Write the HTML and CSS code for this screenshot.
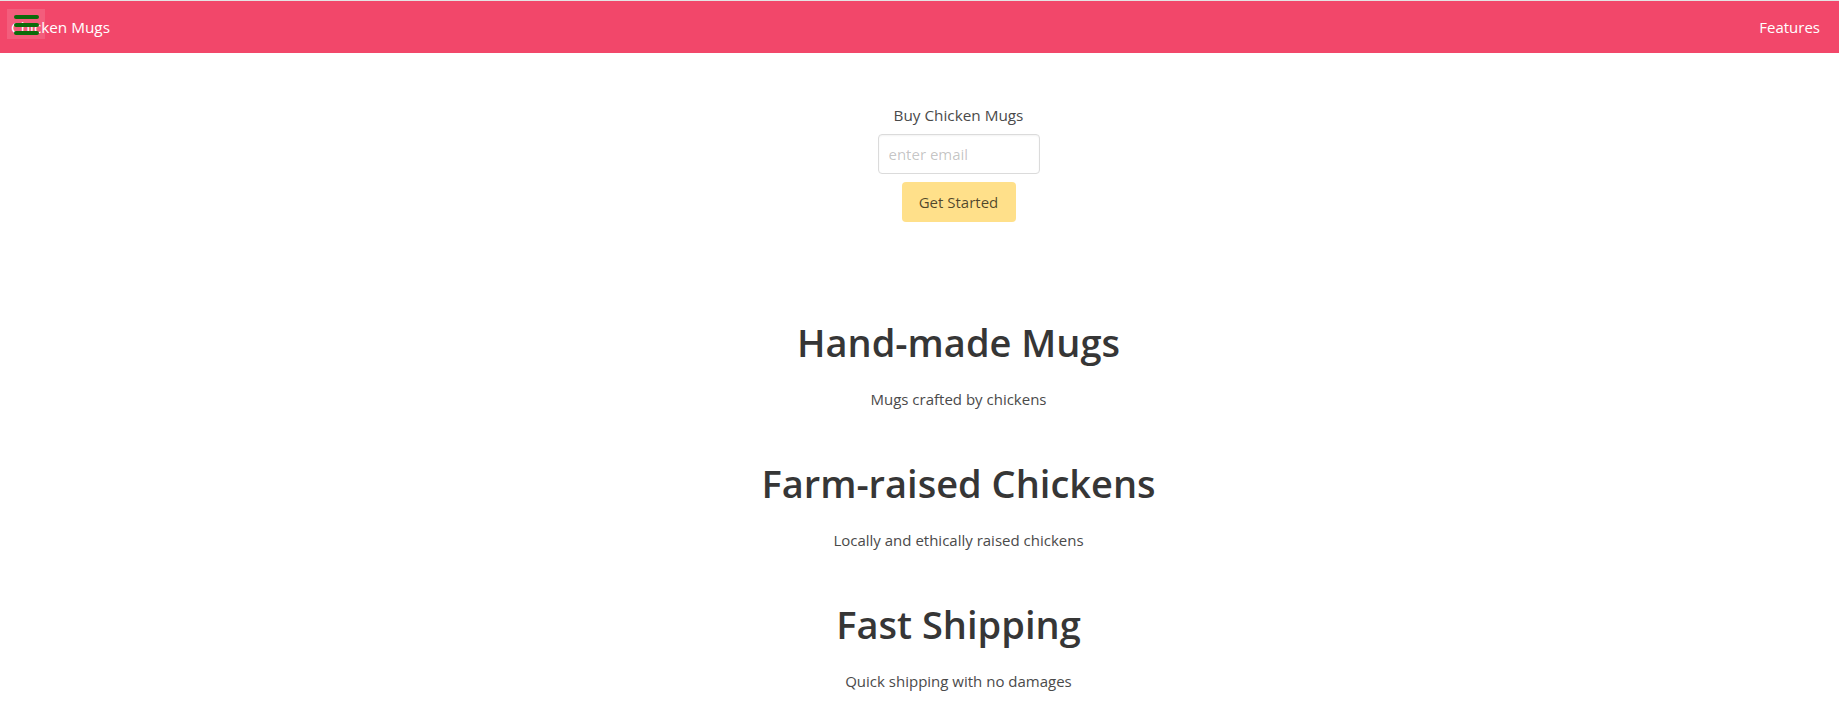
FILE: index.html
```html
<!DOCTYPE html>
<html lang="en">
<head>
<meta charset="utf-8">
<title>Chicken Mugs</title>
<link rel="stylesheet" href="styles.css">
</head>
<body>
<nav class="navbar">
  <div class="brand">
    <span class="brand-text">Chicken Mugs</span>
    <span class="burger" aria-hidden="true"><i></i><i></i><i></i></span>
  </div>
  <a class="nav-link" href="#features">Features</a>
</nav>
<main class="page">
  <section class="signup">
    <p class="signup-label">Buy Chicken Mugs</p>
    <input class="email" type="email" placeholder="enter email">
    <button class="cta" type="button">Get Started</button>
  </section>
  <section class="features" id="features">
    <div class="feature">
      <h2 class="feature-title">Hand-made Mugs</h2>
      <p class="feature-text">Mugs crafted by chickens</p>
    </div>
    <div class="feature">
      <h2 class="feature-title">Farm-raised Chickens</h2>
      <p class="feature-text">Locally and ethically raised chickens</p>
    </div>
    <div class="feature">
      <h2 class="feature-title">Fast Shipping</h2>
      <p class="feature-text">Quick shipping with no damages</p>
    </div>
  </section>
</main>
</body>
</html>
```

FILE: styles.css
```css
* { box-sizing: border-box; }
html, body { margin: 0; padding: 0; }
body {
  font-family: "Open Sans", "Noto Sans", sans-serif;
  font-size: 16px;
  line-height: 1.5;
  color: #4a4a4a;
  background: #fff;
  border-top: 1px solid #e4e4e4;
}
.navbar {
  height: 52px;
  background: #f2476a;
  display: flex;
  align-items: center;
  justify-content: space-between;
  padding: 0 19px 0 11px;
}
.brand { position: relative; display: flex; align-items: center; }
.brand-text { color: #fff; font-size: 15.3px; }
.burger {
  position: absolute;
  left: -4px;
  top: -7px;
  width: 38px;
  height: 30px;
  background: rgba(255,255,255,0.12);
  display: flex;
  flex-direction: column;
  align-items: center;
  gap: 4px;
  padding-top: 6px;
}
.burger i {
  display: block;
  width: 25px;
  height: 4px;
  border-radius: 2px;
  background: #0b6b0b;
}
.nav-link { color: #fff; text-decoration: none; font-size: 15px; }
.page {
  display: flex;
  flex-direction: column;
  align-items: center;
  padding-left: 78px;
}
.signup {
  display: flex;
  flex-direction: column;
  align-items: center;
  padding-top: 50px;
}
.signup-label { margin: 0; font-size: 15.3px; line-height: 24px; }
.email {
  margin-top: 7px;
  width: 162px;
  height: 40px;
  border: 1px solid #dbdbdb;
  border-radius: 4px;
  padding: 0 10px;
  font: inherit;
  font-size: 15px;
  color: #363636;
  box-shadow: inset 0 1px 2px rgba(10,10,10,0.05);
}
.email::placeholder { color: rgba(54,54,54,0.3); }
.cta {
  margin-top: 8px;
  width: 114px;
  height: 40px;
  border: 0;
  border-radius: 4px;
  background: #ffe08a;
  color: rgba(0,0,0,0.7);
  font: inherit;
  font-size: 15px;
}
.features {
  display: flex;
  flex-direction: column;
  align-items: center;
  gap: 50px;
  margin-top: 98px;
}
.feature { display: flex; flex-direction: column; align-items: center; gap: 22px; }
.feature-title {
  margin: 0;
  font-size: 38px;
  font-weight: 600;
  line-height: 45px;
  color: #363636;
}
.feature-text { margin: 0; font-size: 15px; line-height: 24px; }
```
